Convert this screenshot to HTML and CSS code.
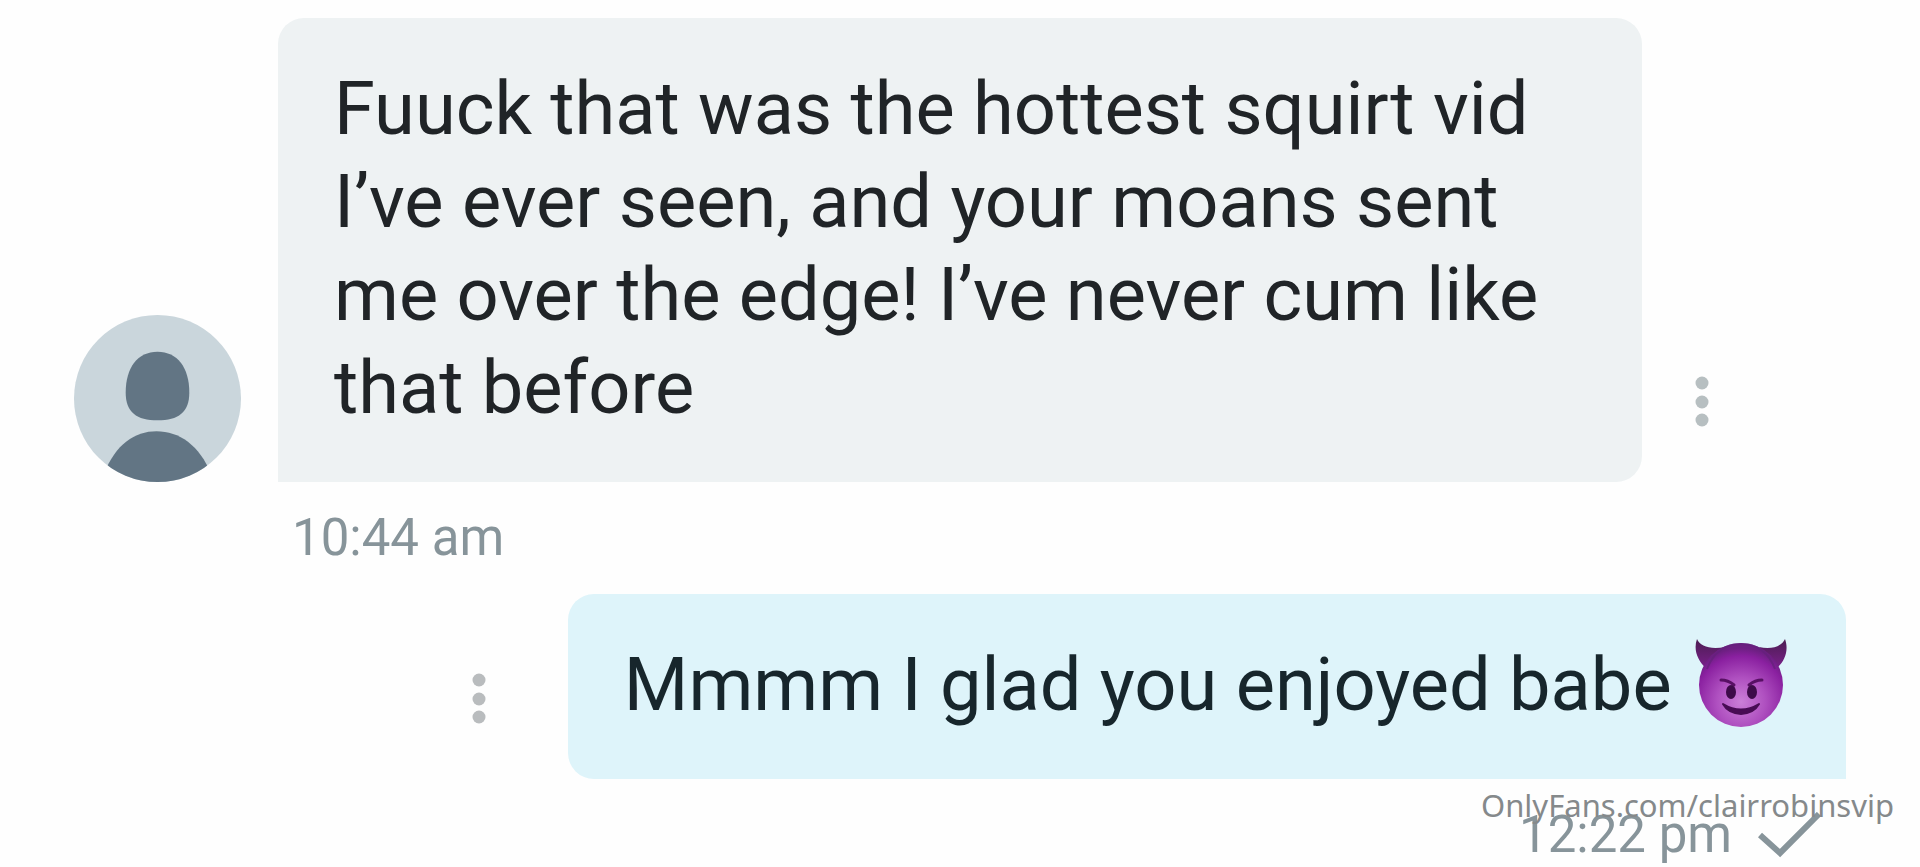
FILE: index.html
```
<!DOCTYPE html>
<html lang="en">
<head>
    <meta charset="utf-8">
    <title>Messages</title>
    <link rel="stylesheet" href="styles.css">
</head>
<body>
    <main class="chat">
        <div class="message">
            <svg class="avatar" viewBox="0 0 168 168" role="img" aria-label="User avatar">
                <clipPath id="avatar-clip"><circle cx="84" cy="84" r="84"/></clipPath>
                <g clip-path="url(#avatar-clip)">
                    <rect width="168" height="168" fill="#cad6dc"/>
                    <path d="M84 37C104 37 116 53 116 78C116 98 105 106 84 106C63 106 52 98 52 78C52 53 64 37 84 37Z" fill="#627584"/>
                    <path d="M30 160C42 130 61 117 83 117C106 117 126 131 138 160V168H30Z" fill="#627584"/>
                </g>
            </svg>
            <p class="bubble">Fuuck that was the hottest squirt vid I’ve ever seen, and your moans sent me over the edge! I’ve never cum like that before</p>
            <button class="menu" type="button" aria-label="Message options">
                <svg width="14" height="52" viewBox="0 0 14 52" fill="#b7bfc1">
                    <circle cx="7" cy="8" r="6.500"/>
                    <circle cx="7" cy="27" r="6.500"/>
                    <circle cx="7" cy="45" r="6.500"/>
                </svg>
            </button>
        </div>
        <div class="info">
            <time>10:44 am</time>
        </div>

        <div class="message sent">
            <button class="menu" type="button" aria-label="Message options">
                <svg width="14" height="52" viewBox="0 0 14 52" fill="#b9bcbe">
                    <circle cx="7" cy="8" r="6.500"/>
                    <circle cx="7" cy="27" r="6.500"/>
                    <circle cx="7" cy="45" r="6.500"/>
                </svg>
            </button>
            <p class="bubble">Mmmm I glad you enjoyed babe <svg class="emoji" viewBox="0 0 94 90" role="img" aria-label="Smiling face with horns">
                    <defs>
                        <radialGradient id="face" cx="50%" cy="70%" r="64%">
                            <stop offset="0" stop-color="#cb7fd8"/>
                            <stop offset="0.45" stop-color="#af50c0"/>
                            <stop offset="0.85" stop-color="#8a20a0"/>
                            <stop offset="1" stop-color="#6d1f82"/>
                        </radialGradient>
                        <linearGradient id="horn" x1="0" y1="0" x2="0" y2="1">
                            <stop offset="0" stop-color="#4c1d52"/>
                            <stop offset="1" stop-color="#79208a"/>
                        </linearGradient>
                    </defs>
                    <path d="M3 1C6 8 16 12 31 9L12 30C4 23 -1 12 3 1ZM91 1C88 8 78 12 65 9L83 30C91 23 95 12 91 1Z" fill="url(#horn)"/>
                    <circle cx="47" cy="47" r="42" fill="url(#face)"/>
                    <path d="M13 31C20 13 33 6 47 6S74 13 81 31" fill="none" stroke="#64217a" stroke-width="2" opacity=".7"/>
                    <path d="M27 42Q34 42 40 47M68 42Q61 42 55 47" fill="none" stroke="#581064" stroke-width="3" stroke-linecap="round"/>
                    <ellipse cx="37" cy="54" rx="5" ry="7" fill="#3d0b49"/>
                    <ellipse cx="58" cy="54" rx="5" ry="7" fill="#3d0b49"/>
                    <path d="M29 66Q47 77 65 66Q60 75 47 76Q34 75 29 66Z" fill="#480c54" stroke="#480c54" stroke-width="2" stroke-linejoin="round"/>
                </svg></p>
        </div>
        <div class="info sent">
            <time>12:22 pm</time>
            <svg class="check" width="64" height="46" viewBox="0 0 64 46" role="img" aria-label="Delivered">
                <path d="M2 23L22 41L61 2" fill="none" stroke="#87949a" stroke-width="6"/>
            </svg>
        </div>
        <div class="watermark">OnlyFans.com/clairrobinsvip</div>
    </main>
</body>
</html>
```
FILE: styles.css
```
* {
    box-sizing: border-box;
}
body {
    margin: 0;
    background-color: #fefefe;
    font-family: Roboto, "Liberation Sans", sans-serif;
    color: #202427;
}
.chat {
    position: relative;
    min-height: 100vh;
    padding: 18px 74px 0;
    overflow: hidden;
}
.message {
    display: flex;
    align-items: flex-end;
}
.message.sent {
    justify-content: flex-end;
}
.avatar {
    width: 167px;
    height: 167px;
    flex-shrink: 0;
    margin-right: 37px;
}
.bubble {
    margin: 0;
    max-width: 1364px;
    padding: 44px 56px 48px;
    border-radius: 26px 26px 26px 0;
    background-color: #eef2f3;
    font-size: 74px;
    line-height: 93px;
}
.sent .bubble {
    border-radius: 26px 26px 0 26px;
    background-color: #def4fa;
    color: #17262c;
}
.emoji {
    width: 94px;
    height: 90px;
    margin: 0 2px 0 4px;
    vertical-align: -18px;
}
.menu {
    display: flex;
    margin: 0 0 55px;
    padding: 0 53px;
    border: none;
    background: none;
    cursor: pointer;
}
.sent .menu {
    padding: 0 82px;
}
.info {
    display: flex;
    align-items: center;
    height: 112px;
    padding-left: 218px;
    font-size: 51px;
    line-height: 60px;
    color: #87949a;
}
.info.sent {
    justify-content: flex-end;
    gap: 26px;
    padding: 0 24px 0 0;
}
.watermark {
    position: absolute;
    right: 26px;
    top: 785px;
    font-family: "Noto Sans", sans-serif;
    font-size: 31px;
    line-height: 40px;
    color: #85898b;
}
```
